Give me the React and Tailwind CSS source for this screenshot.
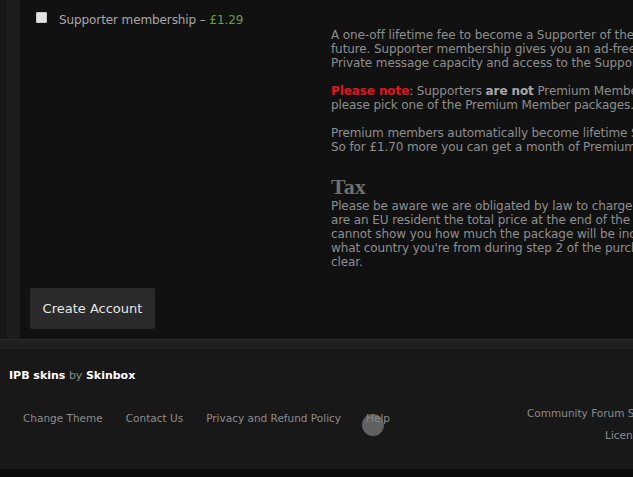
import React from 'react'

const descLines = [
    'A one-off lifetime fee to become a Supporter of the site and help secure its',
    'future. Supporter membership gives you an ad-free experience, increased',
    'Private message capacity and access to the Supporters forum.',
]

const taxLines = [
    'Please be aware we are obligated by law to charge VAT on all purchases. If you',
    'are an EU resident the total price at the end of the checkout may differ as we',
    'cannot show you how much the package will be including VAT until we know',
    "what country you're from during step 2 of the purchase, where it will be made",
    'clear.',
]

const footerLinks = ['Change Theme', 'Contact Us', 'Privacy and Refund Policy', 'Help']

export default function App() {
    return (
        <div className="relative w-[633px] h-[477px] overflow-hidden bg-[#181818] font-['DejaVu_Sans',sans-serif]">
            <div className="w-[900px]">
                {/* main panel */}
                <div className="flex bg-[#161616] pl-[7px]">
                    <div className="flex-1 border-l-[13px] border-[#1d1d1d] bg-[#111111] pl-[10px] pt-[12px] pb-[10px]">
                        <div className="flex">
                            <div className="w-[301px] shrink-0 pl-[6px]">
                                <label className="flex items-start gap-[12px] text-[12px] leading-[14px] text-[#a8a8a8]">
                                    <span className="block w-[11px] h-[11px] rounded-[1px] bg-[#e2e2e2] border border-[#c8c8c8]" />
                                    <span className="mt-[1px] tracking-[-0.1px]">
                                        Supporter membership – <span className="text-[#6f9a4c]">£1.29</span>
                                    </span>
                                </label>
                            </div>
                            <div className="pt-[16px] text-[12px] leading-[14px] tracking-[-0.1px] text-[#8e8e8e] whitespace-nowrap">
                                {descLines.map((l) => (
                                    <div key={l}>{l}</div>
                                ))}
                                <div className="mt-[14px]">
                                    <span className="font-bold text-[#e3141c]">Please note</span>: Supporters{' '}
                                    <span className="font-bold text-[#a8a8a8]">are not</span> Premium Members and if you want those benefits
                                </div>
                                <div>please pick one of the Premium Member packages.</div>
                                <div className="mt-[14px]">Premium members automatically become lifetime Supporters as well.</div>
                                <div>So for £1.70 more you can get a month of Premium membership too.</div>
                                <div className="mt-[21px] font-['Liberation_Serif',serif] font-bold text-[22px] leading-[24px] tracking-normal text-[#6e6e6e]">Tax</div>
                                {taxLines.map((l) => (
                                    <div key={l}>{l}</div>
                                ))}
                            </div>
                        </div>
                        <button className="mt-[19px] h-[41px] w-[125px] rounded-[2px] bg-[#2a2a2a] text-[13px] text-[#e6e6e6]">
                            Create Account
                        </button>
                    </div>
                </div>
                <div className="h-[10px] bg-[#202020] border-t border-[#2c2c2c]" />

                {/* footer */}
                <div className="pl-[9px] pt-[20px] text-[11px] leading-[14px]">
                    <span className="font-bold text-white">IPB skins</span>{' '}
                    <span className="text-[#8a8a8a]">by</span>{' '}
                    <span className="font-bold text-white">Skinbox</span>
                </div>
                <div className="flex h-[86px] pl-[23px] pt-[23px] text-[10.5px] leading-[14px] text-[#8c8c8c]">
                    <div className="flex gap-[23px] pt-[5px] h-fit">
                        {footerLinks.map((l, i) => (
                            <span key={l} className={i === 3 ? 'ml-[2px]' : ''}>{l}</span>
                        ))}
                    </div>
                    <div className="ml-[137px] flex flex-col gap-[8px] whitespace-nowrap">
                        <span>Community Forum Software by IPS, Inc.</span>
                        <span className="ml-[78px]">
                            Licensed to: <span className="text-[#c98a4a]">TF2 Community</span>
                        </span>
                    </div>
                </div>
                <div className="h-[10px] bg-[#0b0b0b]" />
            </div>

            {/* click indicator */}
            <div className="absolute left-[362px] top-[414px] w-[22px] h-[22px] rounded-full bg-[#808080] opacity-70" />
        </div>
    )
}
